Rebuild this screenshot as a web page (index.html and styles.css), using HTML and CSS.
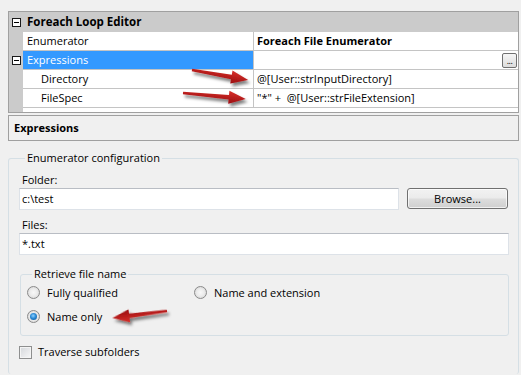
FILE: index.html
```html
<!DOCTYPE html>
<html>
<head>
<meta charset="utf-8">
<link rel="stylesheet" href="styles.css">
</head>
<body>
<div class="page">
  <div class="pgrid">
    <div class="mg"><span class="tog"></span></div>
    <div class="cat">Foreach Loop Editor</div>
    <div class="mg"></div>
    <div class="nm">Enumerator</div>
    <div class="vl b">Foreach File Enumerator</div>
    <div class="mg"><span class="tog"></span></div>
    <div class="nm sel">Expressions</div>
    <div class="vl btncell"><span class="ell">...</span></div>
    <div class="mg"></div>
    <div class="nm sub">Directory</div>
    <div class="vl">@[User::strInputDirectory]</div>
    <div class="mg"></div>
    <div class="nm sub">FileSpec</div>
    <div class="vl">"*" +&nbsp; @[User::strFileExtension]</div>
    <div class="mg"></div>
    <div class="fill"></div>
  </div>

  <div class="desc">Expressions</div>

  <fieldset class="grp outer">
    <legend>Enumerator configuration</legend>
    <div class="lbl first">Folder:</div>
    <div class="line">
      <div class="tb folder">c:\test</div>
      <div class="btn">Browse...</div>
    </div>
    <div class="lbl">Files:</div>
    <div class="tb wide">*.txt</div>
    <fieldset class="grp inner">
      <legend>Retrieve file name</legend>
      <div class="radios">
        <div class="opt"><span class="radio"></span>Fully qualified</div>
        <div class="opt"><span class="radio"></span>Name and extension</div>
        <div class="opt"><span class="radio on"></span>Name only</div>
      </div>
    </fieldset>
    <div class="opt chk"><span class="box"></span>Traverse subfolders</div>
  </fieldset>

  <svg class="arrows" width="521" height="375" viewBox="0 0 521 375">
    <defs>
      <filter id="sh" x="-30%" y="-60%" width="160%" height="220%">
        <feDropShadow dx="2" dy="3" stdDeviation="1.7" flood-color="#000" flood-opacity="0.5"/>
      </filter>
      <linearGradient id="rg" x1="0" y1="0" x2="0" y2="1">
        <stop offset="0" stop-color="#d8302a"/>
        <stop offset="1" stop-color="#990c0f"/>
      </linearGradient>
    </defs>
    <g filter="url(#sh)">
      <g transform="translate(192 70) rotate(10.1)">
        <polygon fill="url(#rg)" points="0,-1.3 40,-2.3 40,-6.5 57,0 40,6.5 40,2.3 0,1.3"/>
      </g>
      <g transform="translate(183 93) rotate(5.4)">
        <polygon fill="url(#rg)" points="0,-1.3 46,-2.3 46,-6.5 63,0 46,6.5 46,2.3 0,1.3"/>
      </g>
      <g transform="translate(167 311) rotate(172.7)">
        <polygon fill="url(#rg)" points="0,-1.3 38,-2.3 38,-6.5 55,0 38,6.5 38,2.3 0,1.3"/>
      </g>
    </g>
  </svg>
</div>
</body>
</html>
```

FILE: styles.css
```css
* { box-sizing: border-box; }
html, body {
  margin: 0;
  padding: 0;
  background: #f0f0f0;
}
body {
  font-family: "Open Sans", "Noto Sans", sans-serif;
  font-size: 11px;
  color: #000;
  width: 521px;
  height: 375px;
  overflow: hidden;
}
.page {
  position: relative;
  width: 521px;
  height: 375px;
  padding-top: 11px;
  overflow: hidden;
}

/* property grid */
.pgrid {
  display: grid;
  grid-template-columns: 14px 230px 1fr;
  grid-template-rows: 20px repeat(4, 19px) 4px;
  margin: 0 2px 0 8px;
  border: 1px solid #a0a0a0;
  background: #fff;
}
.mg {
  background: #cbcbcb;
  display: flex;
  align-items: center;
  padding-left: 3px;
}
.tog {
  display: block;
  width: 9px;
  height: 9px;
  border: 1px solid #1a1a1a;
  background: #fff linear-gradient(#000, #000) no-repeat center / 5px 1px;
}
.cat {
  grid-column: 2 / 4;
  background: #cbcbcb;
  font-weight: bold;
  line-height: 20px;
  padding-left: 4px;
  font-size: 11.5px;
}
.nm, .vl {
  border-bottom: 1px solid #c4c4c4;
  line-height: 18px;
  white-space: nowrap;
}
.nm { padding-left: 4px; }
.nm.sub { padding-left: 18px; }
.nm.sel { background: #3399ff; color: #fff; }
.vl {
  border-left: 1px solid #c4c4c4;
  padding-left: 3px;
}
.vl.b { font-weight: bold; }
.btncell {
  display: flex;
  justify-content: flex-end;
  align-items: center;
  padding-right: 1px;
}
.ell {
  width: 15px;
  height: 15px;
  border: 1px solid #707070;
  border-radius: 2px;
  background: linear-gradient(#f6f6f6, #dcdcdc);
  font-size: 9px;
  line-height: 13px;
  text-align: center;
  letter-spacing: -0.5px;
}
.fill { grid-column: 2 / 4; }

/* description panel */
.desc {
  margin: 2px 2px 0 8px;
  height: 26px;
  border: 1px solid #a0a0a0;
  font-weight: bold;
  line-height: 24px;
  padding-left: 5px;
}

/* group boxes */
.grp {
  border: 1px solid #d5dfe5;
  border-radius: 3px;
  margin: 0;
  min-width: 0;
}
.grp legend {
  padding: 0 2px;
  line-height: 16px;
  color: #000;
}
.outer {
  margin: 9px 2px 0 8px;
  padding: 0 9px 14px 10px;
  border-bottom: none;
}
.outer > legend { margin-left: 6px; }
.lbl {
  line-height: 16px;
  padding-left: 3px;
  margin-top: 7px;
}
.lbl.first { margin-top: 6px; }
.line {
  display: flex;
  align-items: flex-start;
}
.tb {
  height: 22px;
  border: 1px solid #dde2e8;
  border-top-color: #b9bdc4;
  background: #fff;
  padding-left: 2px;
  line-height: 20px;
}
.tb.folder { width: 380px; }
.btn {
  width: 101px;
  height: 21px;
  margin-left: 8px;
  border: 1px solid #707070;
  border-radius: 3px;
  background: linear-gradient(#f2f2f2 0%, #ebebeb 48%, #dddddd 52%, #cfcfcf 100%);
  box-shadow: inset 0 0 0 1px rgba(255,255,255,0.7);
  text-align: center;
  line-height: 19px;
}
.inner {
  margin: 11px 0 0 1px;
  padding: 0 0 7px 6px;
}
.inner > legend { margin-left: 5px; }
.radios {
  display: grid;
  grid-template-columns: 167px auto;
  grid-auto-rows: 24px;
  margin-top: -2px;
}
.opt {
  display: flex;
  align-items: center;
  white-space: nowrap;
}
.radio {
  width: 13px;
  height: 13px;
  border-radius: 50%;
  border: 1px solid #8a8a8a;
  background: radial-gradient(circle at 50% 50%, #f8f8f8 0%, #ececec 45%, #cfcfcf 100%);
  margin-right: 7px;
  flex: none;
  display: flex;
  align-items: center;
  justify-content: center;
}
.radio.on::after {
  content: "";
  width: 7px;
  height: 7px;
  border-radius: 50%;
  background: radial-gradient(circle at 45% 40%, #8fd1ff 0%, #2a8ad6 45%, #0d4f8f 100%);
}
.chk {
  margin-top: 8px;
  line-height: 16px;
}
.box {
  width: 13px;
  height: 13px;
  border: 1px solid #8e8f8f;
  background: linear-gradient(135deg, #d4d7db, #f7f7f7);
  box-shadow: inset 0 0 0 1px #f4f4f4;
  margin-right: 6px;
  flex: none;
}

/* annotation arrows laid over the screenshot */
.arrows {
  position: absolute;
  left: 0;
  top: 0;
  pointer-events: none;
}
```
